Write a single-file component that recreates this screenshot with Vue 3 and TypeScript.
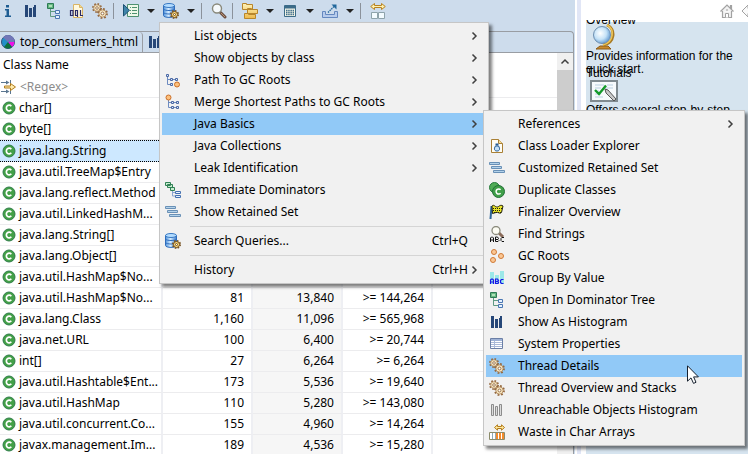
<script setup lang="ts">
interface MenuEntry {
  label: string
  icon?: string
  arrow?: boolean
  shortcut?: string
  active?: boolean
  divider?: boolean
}

interface ClassRow {
  name: string
  objects?: string
  shallow?: string
  retained?: string
  selected?: boolean
}

interface Tool {
  icon: string
  label: string
  dropdown?: boolean
}

const toolGroups: Tool[][] = [
  [
    { icon: 'info', label: 'Overview' },
    { icon: 'histogram', label: 'Histogram' },
    { icon: 'tree', label: 'Dominator tree' },
    { icon: 'oql', label: 'Query editor' },
    { icon: 'gears', label: 'Threads' },
  ],
  [
    { icon: 'run', label: 'Run report', dropdown: true },
    { icon: 'query', label: 'Query browser', dropdown: true },
  ],
  [{ icon: 'search', label: 'Find object' }],
  [
    { icon: 'group', label: 'Group result', dropdown: true },
    { icon: 'calc', label: 'Calculate', dropdown: true },
    { icon: 'export', label: 'Export', dropdown: true },
  ],
  [{ icon: 'compare', label: 'Compare' }],
]

const rows: ClassRow[] = [
  { name: 'char[]' },
  { name: 'byte[]' },
  { name: 'java.lang.String', selected: true },
  { name: 'java.util.TreeMap$Entry' },
  { name: 'java.lang.reflect.Method' },
  { name: 'java.util.LinkedHashM...' },
  { name: 'java.lang.String[]' },
  { name: 'java.lang.Object[]' },
  { name: 'java.util.HashMap$No...' },
  { name: 'java.util.HashMap$No...', objects: '81', shallow: '13,840', retained: '>= 144,264' },
  { name: 'java.lang.Class', objects: '1,160', shallow: '11,096', retained: '>= 565,968' },
  { name: 'java.net.URL', objects: '100', shallow: '6,400', retained: '>= 20,744' },
  { name: 'int[]', objects: '27', shallow: '6,264', retained: '>= 6,264' },
  { name: 'java.util.Hashtable$Ent...', objects: '173', shallow: '5,536', retained: '>= 19,640' },
  { name: 'java.util.HashMap', objects: '110', shallow: '5,280', retained: '>= 143,080' },
  { name: 'java.util.concurrent.Co...', objects: '155', shallow: '4,960', retained: '>= 14,264' },
  { name: 'javax.management.Im...', objects: '189', shallow: '4,536', retained: '>= 15,280' },
]

const queryMenu: MenuEntry[] = [
  { label: 'List objects', arrow: true },
  { label: 'Show objects by class', arrow: true },
  { label: 'Path To GC Roots', icon: 'path', arrow: true },
  { label: 'Merge Shortest Paths to GC Roots', icon: 'merge', arrow: true },
  { label: 'Java Basics', arrow: true, active: true },
  { label: 'Java Collections', arrow: true },
  { label: 'Leak Identification', arrow: true },
  { label: 'Immediate Dominators', icon: 'dominators' },
  { label: 'Show Retained Set', icon: 'retained' },
  { label: 'Search Queries...', icon: 'query', shortcut: 'Ctrl+Q', divider: true },
  { label: 'History', shortcut: 'Ctrl+H', arrow: true, divider: true },
]

const basicsMenu: MenuEntry[] = [
  { label: 'References', arrow: true },
  { label: 'Class Loader Explorer', icon: 'loader' },
  { label: 'Customized Retained Set', icon: 'retained' },
  { label: 'Duplicate Classes', icon: 'duplicate' },
  { label: 'Finalizer Overview', icon: 'flag' },
  { label: 'Find Strings', icon: 'strings' },
  { label: 'GC Roots', icon: 'roots' },
  { label: 'Group By Value', icon: 'byvalue' },
  { label: 'Open In Dominator Tree', icon: 'tree' },
  { label: 'Show As Histogram', icon: 'histogram' },
  { label: 'System Properties', icon: 'props' },
  { label: 'Thread Details', icon: 'gears', active: true },
  { label: 'Thread Overview and Stacks', icon: 'gears' },
  { label: 'Unreachable Objects Histogram', icon: 'unreachable' },
  { label: 'Waste in Char Arrays', icon: 'waste' },
]

const menus = [
  { id: 'queries', label: 'Queries', entries: queryMenu },
  { id: 'basics', label: 'Java Basics', entries: basicsMenu },
]
</script>

<template>
  <svg class="sprite" aria-hidden="true">
    <defs>
      <linearGradient id="g-db" x1="0" x2="1" y1="0" y2="0">
        <stop offset="0" stop-color="#4f93dc" />
        <stop offset=".45" stop-color="#d5ecff" />
        <stop offset="1" stop-color="#3b7dce" />
      </linearGradient>
      <linearGradient id="g-gold" x1="0" x2="0" y1="0" y2="1">
        <stop offset="0" stop-color="#fff3b8" />
        <stop offset="1" stop-color="#edb94a" />
      </linearGradient>
      <radialGradient id="g-globe" cx=".4" cy=".4" r=".6">
        <stop offset="0" stop-color="#ffffff" />
        <stop offset=".6" stop-color="#c5e2f7" />
        <stop offset="1" stop-color="#6fa3d6" />
      </radialGradient>
      <symbol id="cog" viewBox="0 0 10 10">
        <circle cx="5" cy="5" r="4.100" fill="none" stroke="#94683e" stroke-width="1.700" stroke-dasharray="1.600 1.620" />
        <circle cx="5" cy="5" r="3.300" fill="#f6e6c2" stroke="#a87c4c" stroke-width=".7" />
        <circle cx="5" cy="5" r="1.300" fill="#fff" stroke="#8d6238" stroke-width=".8" />
      </symbol>
      <symbol id="i-info" viewBox="0 0 16 16">
        <path d="M6 2h3v2.500H6zM5 6h4v6.500h2V14H5v-1.500h1.500v-5H5z" fill="#1d5c92" />
      </symbol>
      <symbol id="i-histogram" viewBox="0 0 16 16">
        <path d="M2 2h3v12H2zM6 5h3v9H6zM10 4h1v10h-1zM11 2h2v12h-2z" fill="#264778" />
      </symbol>
      <symbol id="i-unreachable" viewBox="0 0 16 16">
        <path d="M2.500 2.500h2v11h-2zM6.500 4.500h2v9h-2zM10.500 2.500h2v11h-2z" fill="#dcdcdc" stroke="#8c8c8c" />
      </symbol>
      <symbol id="i-tree" viewBox="0 0 16 16">
        <path d="M4.500 6v7.500H9M4.500 8.500H9" fill="none" stroke="#5f9a83" />
        <path d="M1.500 .5h6v5h-6z" fill="#65b882" stroke="#2d7a55" />
        <path d="M3 2h3v2H3z" fill="#aee0b8" />
        <path d="M9.500 7.500h4v3h-4zM9.500 12.500h4v3h-4z" fill="#e4f1ff" stroke="#4a76b2" />
      </symbol>
      <symbol id="i-oql" viewBox="0 0 16 16">
        <path d="M4.500 1.500h6l3 3v10h-9z" fill="#fff9df" stroke="#d9b465" />
        <path d="M10.500 1.500v3h3" fill="#f2d891" stroke="#d9b465" />
        <path d="M2 7.500h2v5H1.500v-5zM6.500 7.500h2v5h-2zM8.500 12v2M11.500 7v5.500H14" fill="none" stroke="#2b2b66" stroke-width="1.200" />
      </symbol>
      <symbol id="i-gears" viewBox="0 0 16 16">
        <use href="#cog" x="0" y="0" width="10" height="10" />
        <use href="#cog" x="5" y="5" width="11" height="11" />
      </symbol>
      <symbol id="i-run" viewBox="0 0 16 16">
        <path d="M4.500 1.500h11v12h-11z" fill="#eef8e8" stroke="#4e9170" />
        <path d="M7 4.500h1M9 4.500h5M7 7.500h1M9 7.500h5M7 10.500h1M9 10.500h5" stroke="#4e9170" />
        <path d="M.5 1.500v11.500l6-5.700z" fill="#3f84a9" stroke="#1c5173" />
      </symbol>
      <symbol id="i-query" viewBox="0 0 16 16">
        <path d="M.5 2.500v10c0 2.500 11 2.500 11 0v-10z" fill="url(#g-db)" stroke="#2e6cbc" />
        <path d="M.5 6c1 2 10 2 11 0M.5 9.500c1 2 10 2 11 0" fill="none" stroke="#2e6cbc" />
        <ellipse cx="6" cy="2.500" rx="5.500" ry="2" fill="#b3dcff" stroke="#3a7ac4" />
        <circle cx="11.500" cy="11.500" r="3.500" fill="none" stroke="#75501f" stroke-width="2" stroke-dasharray="1.500 1.250" />
        <circle cx="11.500" cy="11.500" r="3" fill="#f8d77d" stroke="#75501f" />
        <circle cx="11.500" cy="11.500" r="1" fill="#fff" stroke="#75501f" />
      </symbol>
      <symbol id="i-search" viewBox="0 0 16 16">
        <path d="M9.500 9.500l4.500 4.500" stroke="#6b4f40" stroke-width="3" stroke-linecap="round" />
        <path d="M10 10l4 4" stroke="#b89274" />
        <circle cx="6" cy="5.500" r="4.500" fill="#f6fafc" stroke="#8a8a7c" stroke-width="1.400" />
      </symbol>
      <symbol id="i-group" viewBox="0 0 16 16">
        <path d="M.5 .5h4v1h6v5H.5zM5.500 5.500h4v1h6v4h-10zM2.500 10.500h4v1h7v4h-11z" fill="url(#g-gold)" stroke="#b8862b" />
      </symbol>
      <symbol id="i-calc" viewBox="0 0 16 16">
        <path d="M2.500 2.500h11v11h-11z" fill="#f2f3e4" stroke="#3b6b88" />
        <path d="M3 3h10v2.500H3z" fill="#3b6b88" />
        <path d="M4 7.500h8M4 9.500h8M4 11.500h8" stroke="#3f6f8c" stroke-width="1.300" stroke-dasharray="1.500 .7" />
      </symbol>
      <symbol id="i-export" viewBox="0 0 16 16">
        <path d="M.5 8.500h3v3h9v-3h3v6H.5z" fill="#b7ccec" stroke="#6488bf" />
        <path d="M6 9.500l6-6" fill="none" stroke="#22689b" stroke-width="1.400" stroke-dasharray="1.500 .8" />
        <path d="M9.500 1.500h5v5z" fill="#22689b" />
      </symbol>
      <symbol id="i-compare" viewBox="0 0 16 16">
        <path d="M.7 3.500L4.500 .5V2.500H11.500V.5L15.300 3.500L11.500 6.500V4.500H4.500V6.500Z" fill="#fff0ad" stroke="#b8821f" />
        <path d="M1.500 9.500h6v6h-6zM8.500 9.500h6v6h-6z" fill="#f3fbff" stroke="#8ea3ab" />
      </symbol>
      <symbol id="i-path" viewBox="0 0 16 16">
        <path d="M2.500 2v10.500H6M2.500 7.500h8" fill="none" stroke="#6d8bc0" />
        <path d="M1.500 2.500h2v2h-2zM5.500 6.500h2v2h-2zM10.500 6.500h2v2h-2zM5.500 11.500h2v2h-2z" fill="#dde8f8" stroke="#4a68a4" />
        <circle cx="12" cy="12.500" r="2.500" fill="#fbc07d" stroke="#cc6f28" />
      </symbol>
      <symbol id="i-merge" viewBox="0 0 16 16">
        <path d="M3.500 6v7.500H13M3.500 8.500H13" fill="none" stroke="#6d8bc0" />
        <path d="M6.500 7.500h2v2h-2zM11.500 7.500h2v2h-2zM6.500 12.500h2v2h-2zM11.500 12.500h2v2h-2z" fill="#dde8f8" stroke="#4a68a4" />
        <circle cx="3.500" cy="3.500" r="2.500" fill="#fbc07d" stroke="#cc6f28" />
      </symbol>
      <symbol id="i-dominators" viewBox="0 0 16 16">
        <path d="M7.500 8v6H11M7.500 10.500H11" fill="none" stroke="#8ba5cf" />
        <path d="M.5 .5h5v3h-5zM2.500 2.500h5v3h-5zM5.500 5.500h4v3h-4z" fill="#c6ecce" stroke="#2f8054" />
        <path d="M10.500 9.500h5v2h-5zM10.500 13.500h5v2h-5z" fill="#e4f1ff" stroke="#4470b0" />
      </symbol>
      <symbol id="i-retained" viewBox="0 0 16 16">
        <path d="M.5 2.500h10v2H.500zM2.500 6.500h10v2h-10zM4.500 10.500h11v2h-11z" fill="#b3d2ea" stroke="#6990b6" />
      </symbol>
      <symbol id="i-loader" viewBox="0 0 16 16">
        <path d="M2.500 1.500h7l4 4v9h-11z" fill="#fffdf4" stroke="#a98035" />
        <path d="M9.500 1.500v4h4" fill="#f5dc9c" stroke="#a98035" />
        <path d="M6.500 8h3c2 3 1 5-1.500 5s-3.500-2-1.500-5z" fill="#c6e2f8" stroke="#235b96" />
        <path d="M6.500 5.500h3v2h-3z" fill="#235b96" />
      </symbol>
      <symbol id="i-duplicate" viewBox="0 0 16 16">
        <circle cx="5.500" cy="5.500" r="5" fill="#4fac56" stroke="#287a3c" />
        <circle cx="9.500" cy="9.500" r="6" fill="#3f9f48" stroke="#246f38" />
        <path d="M11.600 7.700A2.600 2.600 0 1 0 11.600 11.300" fill="none" stroke="#fff" stroke-width="1.500" />
      </symbol>
      <symbol id="i-flag" viewBox="0 0 16 16">
        <path d="M2.500 2L1.500 15" stroke="#2e6498" stroke-width="2" />
        <path d="M3 2c2-2 3 1 5 1s3-3 6-1l-1.500 6.500c-2 2-3.500-1-5.500 0l-3.500 1z" fill="#e7e328" stroke="#23230f" />
        <path d="M4 4.500h9M4 6.500h8M5 8.500h7" stroke="#23230f" stroke-dasharray="1 1" />
      </symbol>
      <symbol id="i-strings" viewBox="0 0 16 16">
        <path d="M10 7l4 4" stroke="#8a6b5a" stroke-width="3" />
        <circle cx="7" cy="4.500" r="4" fill="#fdfdf4" stroke="#8b8b7d" stroke-width="1.300" />
        <path d="M1.500 16v-4l1-1h1l1 1v4M1.500 14h3M6.500 11v4.500h2.500l1-1-1-1H6.500h2l1-1-1-1.500zM15 11.500h-2l-1 1v2l1 1h2" fill="none" stroke="#111" />
      </symbol>
      <symbol id="i-roots" viewBox="0 0 16 16">
        <circle cx="5" cy="4" r="2.500" fill="#fbc794" stroke="#d07a36" />
        <circle cx="12" cy="8" r="2.500" fill="#fbc794" stroke="#d07a36" />
        <circle cx="4" cy="12" r="2.500" fill="#fbc794" stroke="#d07a36" />
      </symbol>
      <symbol id="i-byvalue" viewBox="0 0 16 16">
        <path d="M1 2h4v12H1zM6 5h4v9H6zM11 1h4v13h-4z" fill="#9ce8e8" />
        <path d="M1.500 14v-4l1-1h1l1 1v4M1.500 12h3M6.500 9v4.500h2.500l.5-1-.5-1H6.500h2l1-1-1-1.500zM14.500 9.500h-2l-1 1v2l1 1h2" fill="none" stroke="#1616e6" stroke-width="1.200" />
      </symbol>
      <symbol id="i-props" viewBox="0 0 16 16">
        <path d="M1.500 2.500h12v10h-12z" fill="#fff" stroke="#6b7fa6" />
        <path d="M2 3h11v2H2z" fill="#9eb2d6" />
        <path d="M2 6.500h11M2 8.500h11M2 10.500h11M5.500 5v7" stroke="#a9b9d8" />
      </symbol>
      <symbol id="i-waste" viewBox="0 0 16 16">
        <path d="M5.500 3.500L8.500 .8V2.500H12.500V.8L15.500 3.500L12.500 6.200V4.500H8.500V6.200Z" fill="#ffe89c" stroke="#b27c1c" />
        <path d="M.5 8.500h15v7H.5z" fill="#fff" stroke="#8b8b6a" />
        <path d="M7 9h2v6H7zM10 9h2v6h-2zM13 9h2v6h-2z" fill="#f28a2c" />
        <path d="M3.500 9v6M6.500 9v6" stroke="#8fa9b8" />
      </symbol>
      <symbol id="i-class" viewBox="0 0 14 14">
        <circle cx="7" cy="7" r="6" fill="#43a047" stroke="#2f7d4a" />
        <path d="M9.300 5.200A2.800 2.800 0 1 0 9.300 8.800" fill="none" stroke="#fff" stroke-width="1.700" />
      </symbol>
      <symbol id="i-regex" viewBox="0 0 16 16">
        <path d="M1 3.500h7M1 12.500h7M10.500 1v4M10.500 11v4" stroke="#5b7690" />
        <path d="M6 1.500L9.500 3.500L6 5.500ZM6 10.500L9.500 12.500L6 14.500Z" fill="#5b7690" />
        <path d="M4.500 7h6V4.500L15.500 8L10.500 11.500V9h-6z" fill="#ffedb0" stroke="#b27c1c" />
      </symbol>
      <symbol id="i-pie" viewBox="0 0 16 16">
        <circle cx="8" cy="8" r="6.500" fill="#2390c8" stroke="#33507a" />
        <path d="M8 8L3 3.500A6.500 6.500 0 0 1 14.500 8z" fill="#7277b8" />
        <path d="M8 8h6.500A6.500 6.500 0 0 1 12 13z" fill="#f010e8" />
        <path d="M8 8l4 5A6.500 6.500 0 0 1 4 13z" fill="#0f6e3c" />
      </symbol>
      <symbol id="i-home" viewBox="0 0 16 16">
        <path d="M3.500 8v6.500h9V8M1.500 8.500L8 2l6.500 6.500M11.500 5V2.500h1V6" fill="#f2f2f2" stroke="#a2a2a2" stroke-width="1.200" />
        <path d="M6.500 14.500v-4h3v4M8 6v2" fill="#fff" stroke="#a2a2a2" />
      </symbol>
      <symbol id="i-back" viewBox="0 0 16 16">
        <path d="M1 8L7 2V5.500H15V10.500H7V14Z" fill="#fafafa" stroke="#a2a2a2" />
      </symbol>
    </defs>
  </svg>

  <div class="workbench">
    <section class="editor">
      <div class="toolbar" role="toolbar" aria-label="Heap dump tools">
        <div v-for="(group, g) in toolGroups" :key="g" class="tool-group">
          <template v-for="tool in group" :key="tool.icon">
            <button class="tool" type="button" :aria-label="tool.label">
              <svg class="icon"><use :href="`#i-${tool.icon}`" /></svg>
            </button>
            <button v-if="tool.dropdown" class="drop" type="button" :aria-label="`${tool.label} options`"></button>
          </template>
        </div>
      </div>

      <div class="pane">
        <div class="tabs" role="tablist">
          <button class="tab current" type="button" role="tab" aria-selected="true">
            <svg class="icon"><use href="#i-pie" /></svg>top_consumers_html
          </button>
          <button class="tab" type="button" role="tab" aria-label="Histogram">
            <svg class="icon"><use href="#i-histogram" /></svg>
          </button>
        </div>

        <div class="grid-area">
          <table class="grid">
            <colgroup>
              <col class="c-name" />
              <col class="c-num" />
              <col class="c-num" />
              <col class="c-num" />
              <col />
            </colgroup>
            <thead>
              <tr class="head">
                <th scope="col">Class Name</th>
                <td></td><td></td><td></td><td></td>
              </tr>
              <tr class="filter">
                <td>
                  <span class="cell"><svg class="icon"><use href="#i-regex" /></svg>&lt;Regex&gt;</span>
                </td>
                <td></td><td></td><td></td><td></td>
              </tr>
            </thead>
            <tbody>
              <tr v-for="(row, i) in rows" :key="i" :class="{ selected: row.selected }">
                <td>
                  <span class="cell"><svg class="badge"><use href="#i-class" /></svg>{{ row.name }}</span>
                </td>
                <td class="num">{{ row.objects }}</td>
                <td class="num sorted">{{ row.shallow }}</td>
                <td class="num">{{ row.retained }}</td>
                <td class="rest"></td>
              </tr>
            </tbody>
          </table>
          <div class="scrollbar">
            <button class="scroll-up" type="button" aria-label="Scroll up">
              <svg class="chevron" viewBox="0 0 10 10"><path d="M1.500 6.500L5 3L8.500 6.500" /></svg>
            </button>
            <div class="thumb"></div>
          </div>
        </div>
      </div>
    </section>

    <aside class="help">
      <div class="help-bar">
        <button class="tool" type="button" aria-label="Home"><svg class="icon"><use href="#i-home" /></svg></button>
        <button class="tool" type="button" aria-label="Back"><svg class="icon"><use href="#i-back" /></svg></button>
      </div>
      <div class="help-view">
        <div class="help-page">
          <a class="topic first" href="#overview">Overview</a>
          <svg class="globe" viewBox="0 0 24 26">
            <path d="M8 22h8l3 3H4z" fill="#c98a2b" stroke="#8a5a18" />
            <path d="M15 1c9 4 8 18-4 20" fill="none" stroke="#a87a24" stroke-width="3" />
            <path d="M15 1c8 4 7 17-4 20" fill="none" stroke="#ecc456" stroke-width="1.500" />
            <circle cx="10" cy="11" r="8.500" fill="url(#g-globe)" stroke="#6e8fb0" />
          </svg>
          <p>Provides information for the quick start.</p>
          <a class="topic overlap" href="#tutorials">Tutorials</a>
          <svg class="board" viewBox="0 0 28 22">
            <path d="M1 1h26v20H1z" fill="#f7fafc" stroke="#808a90" stroke-width="2" />
            <path d="M5 5h9M5 8h6M17 5h6M16 8h7M5 11h4M5 14h6M5 17h8" stroke="#b9cfe0" />
            <path d="M5 10l4 4l7-8.500" fill="none" stroke="#149a2a" stroke-width="2.400" />
            <path d="M15 9l3 1l8 9l-2 2l-8-8z" fill="#c9c9c9" stroke="#565656" />
          </svg>
          <p>Offers several step-by-step</p>
        </div>
      </div>
    </aside>

    <div v-for="menu in menus" :key="menu.id" class="menu" :class="menu.id" role="menu" :aria-label="menu.label">
      <template v-for="entry in menu.entries" :key="entry.label">
        <div v-if="entry.divider" class="divider" role="separator"></div>
        <button class="entry" :class="{ active: entry.active }" type="button" role="menuitem">
          <span class="slot">
            <svg v-if="entry.icon" class="icon"><use :href="`#i-${entry.icon}`" /></svg>
          </span>
          <span class="label">{{ entry.label }}</span>
          <span v-if="entry.shortcut" class="shortcut">{{ entry.shortcut }}</span>
          <span class="more">
            <svg v-if="entry.arrow" class="chevron" viewBox="0 0 10 10"><path d="M3.500 1.500L7 5L3.500 8.500" /></svg>
          </span>
        </button>
      </template>
    </div>

    <svg class="pointer" viewBox="0 0 12 19" aria-hidden="true">
      <path d="M.5 .8V16.200L4 12.900L6.500 18.400L9 17.300L6.600 11.900H11.400Z" fill="#fff" stroke="#16202e" />
    </svg>
  </div>
</template>

<style>
body {
  margin: 0;
}
</style>

<style scoped>
.sprite {
  position: absolute;
  width: 0;
  height: 0;
}
.workbench {
  position: relative;
  display: flex;
  height: 100vh;
  overflow: hidden;
  background: #e1e6f6;
  font: 12px/20px "Noto Sans", "Open Sans", sans-serif;
  color: #000;
}
button {
  margin: 0;
  padding: 0;
  border: 0;
  background: none;
  font: inherit;
  color: inherit;
}
.icon {
  display: block;
  flex: none;
  width: 16px;
  height: 16px;
}
.chevron {
  display: block;
  flex: none;
  width: 10px;
  height: 10px;
  fill: none;
  stroke: #404040;
  stroke-width: 1.5;
}

/* Editor */
.editor {
  flex: 1;
  min-width: 0;
  display: flex;
  flex-direction: column;
  box-sizing: border-box;
  padding-right: 1px;
  background: #cddcec;
  border-right: 2px solid #fff;
}
.toolbar {
  display: flex;
  flex: none;
  height: 31px;
}
.tool-group {
  display: flex;
  gap: 7px;
  height: 16px;
  margin-top: 3px;
  padding-right: 5px;
}
.tool-group + .tool-group {
  border-left: 1px solid #8b929b;
  padding-left: 9px;
}
.drop {
  width: 10px;
  display: flex;
  align-items: center;
  justify-content: center;
}
.drop::before {
  content: "";
  border: 4px solid transparent;
  border-top-color: #222;
  border-bottom: 0;
}
.pane {
  flex: 1;
  min-height: 0;
  display: flex;
  flex-direction: column;
  border: 1px solid #999da3;
  border-left: 0;
  border-bottom: 0;
  border-top-right-radius: 4px;
}
.tabs {
  display: flex;
  flex: none;
  height: 20px;
  border-bottom: 1px solid #999da3;
}
.tab {
  display: flex;
  align-items: center;
  gap: 4px;
  padding: 0 4px;
}
.tab.current {
  padding-left: 0;
  border-right: 1px solid #999da3;
  border-top-right-radius: 4px;
}
.grid-area {
  flex: 1;
  min-height: 0;
  display: flex;
  overflow: hidden;
  background: #fff;
}
.grid {
  flex: 1;
  align-self: flex-start;
  table-layout: fixed;
  border-collapse: separate;
  border-spacing: 0;
  width: 0;
}
.c-name {
  width: 163px;
}
.c-num {
  width: 90px;
}
.grid th,
.grid td {
  height: 20px;
  padding: 0;
  font-weight: normal;
  text-align: left;
  white-space: nowrap;
  border-bottom: 1px solid #ececee;
}
.grid .head th,
.grid .head td {
  height: 24px;
  border-bottom: 0;
}
.grid .head th {
  padding-left: 3px;
}
.filter {
  color: #8c8c8c;
}
.filter .cell {
  gap: 4px;
}
.grid tbody td:not(.rest) {
  border-right: 2px solid #eeeff3;
}
.grid .num {
  padding-right: 7px;
  text-align: right;
}
.grid .sorted {
  background: #f6f6f6;
}
.cell {
  display: flex;
  align-items: center;
  gap: 3px;
}
tbody .cell {
  padding-left: 2px;
}
.badge {
  width: 14px;
  height: 14px;
}
.grid .selected td {
  height: 18px;
  background: #cde8ff;
  border-top: 1px dotted #000;
  border-bottom: 1px dotted #000;
}
.scrollbar {
  width: 16px;
  flex: none;
  background: #f0f0f0;
}
.scroll-up {
  display: flex;
  align-items: center;
  justify-content: center;
  width: 100%;
  height: 17px;
}
.thumb {
  height: 60%;
  background: #cdcdcd;
}

/* Help view */
.help {
  display: flex;
  flex-direction: column;
  width: 167px;
  flex: none;
  margin-left: 4px;
  overflow: hidden;
  background: #fff;
}
.help-bar {
  display: flex;
  justify-content: flex-end;
  gap: 6px;
  height: 18px;
  flex: none;
  margin-right: -9px;
  padding-top: 2px;
}
.help-view {
  flex: 1;
  overflow: hidden;
  padding: 0 0 0 5px;
  font: 12px/13px "Liberation Sans", Arial, sans-serif;
}
.help-page {
  height: 100%;
  margin-top: 2px;
  background: #d6e4ef;
}
.topic {
  display: block;
  color: #000;
  text-decoration: none;
}
.topic.first {
  position: relative;
  top: -8px;
}
.overlap {
  margin-top: -9px;
}
.help p {
  width: 150px;
  margin: 0;
}
.globe {
  display: block;
  width: 24px;
  height: 26px;
  margin: -11px 0 0 6px;
}
.board {
  display: block;
  width: 28px;
  height: 22px;
  margin: 0 0 2px 4px;
}

/* Menus */
.menu {
  position: absolute;
  box-sizing: border-box;
  padding: 2px;
  border: 1px solid #c6c6c6;
  background: #f1f1f1;
  box-shadow: 3px 3px 3px rgba(0, 0, 0, 0.5);
}
.menu.queries {
  left: 159px;
  top: 22px;
  width: 330px;
}
.menu.basics {
  left: 483px;
  top: 110px;
  width: 262px;
}
.entry {
  display: flex;
  align-items: center;
  width: 100%;
  height: 22px;
  padding: 0 7px 0 3px;
  text-align: left;
}
.entry.active {
  background: #91c9f7;
}
.slot {
  flex: none;
  width: 16px;
}
.label {
  flex: 1;
  margin-left: 13px;
  white-space: nowrap;
}
.more {
  flex: none;
  width: 10px;
}
.divider {
  height: 1px;
  margin: 3px 0 3px 28px;
  background: #d5d5d5;
}
.shortcut {
  margin-right: 1px;
}
.pointer {
  position: absolute;
  left: 687px;
  top: 365px;
  width: 12px;
  height: 19px;
}
</style>
